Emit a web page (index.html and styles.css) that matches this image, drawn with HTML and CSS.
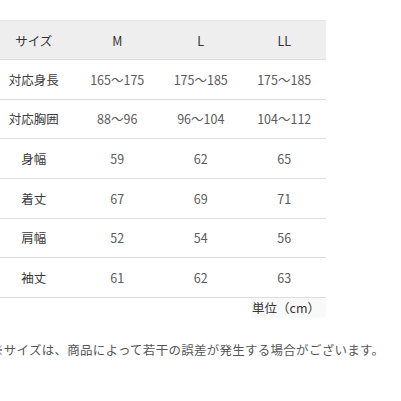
FILE: index.html
```html
<!DOCTYPE html>
<html lang="ja">
<head>
<meta charset="utf-8">
<link rel="stylesheet" href="styles.css">
</head>
<body>
<div class="wrap">
  <div class="size-table">
    <div class="row head"><div>サイズ</div><div>M</div><div>L</div><div>LL</div></div>
    <div class="row"><div class="lbl">対応身長</div><div>165～175</div><div>175～185</div><div>175～185</div></div>
    <div class="row"><div class="lbl">対応胸囲</div><div>88～96</div><div>96～104</div><div>104～112</div></div>
    <div class="row"><div class="lbl">身幅</div><div>59</div><div>62</div><div>65</div></div>
    <div class="row"><div class="lbl">着丈</div><div>67</div><div>69</div><div>71</div></div>
    <div class="row"><div class="lbl">肩幅</div><div>52</div><div>54</div><div>56</div></div>
    <div class="row"><div class="lbl">袖丈</div><div>61</div><div>62</div><div>63</div></div>
  </div>
  <div class="unit-row"><span class="unit">単位（cm）</span></div>
  <p class="note">※サイズは、商品によって若干の誤差が発生する場合がございます。</p>
</div>
</body>
</html>
```
FILE: styles.css
```css
html, body {
  margin: 0;
  padding: 0;
  background: #fff;
}
body {
  font-family: "Noto Sans CJK JP", "Noto Sans", sans-serif;
  font-size: 12.5px;
  color: #555;
  padding-top: 20px;
}
.wrap {
  margin-left: -8px;
  width: 334px;
}
.size-table {
  display: flex;
  flex-direction: column;
}
.row {
  display: grid;
  grid-template-columns: repeat(4, 1fr);
  height: 39.67px;
  box-sizing: border-box;
  border-bottom: 1px solid #dedede;
  align-items: center;
  text-align: center;
  color: #5a5a5a;
}
.row.head {
  height: 40px;
  background: #eeeeee;
  border-top: 1px solid #e6e6e6;
  color: #333;
}
.row .lbl {
  color: #3a3a3a;
}
.unit-row {
  display: flex;
  justify-content: flex-end;
  height: 20px;
}
.unit {
  display: block;
  line-height: 20px;
  padding: 0 6px 0 1px;
  background: #f9f9f9;
  color: #333;
}
.note {
  margin: 22px 0 0 -1px;
  line-height: 19px;
  white-space: nowrap;
  letter-spacing: 0.27px;
  color: #555;
}
```
